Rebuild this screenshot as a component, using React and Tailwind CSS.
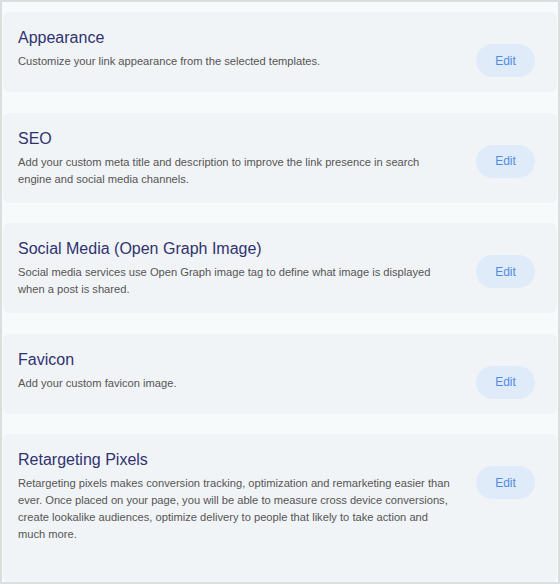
import React from "react";

const items = [
  {
    title: "Appearance",
    desc: "Customize your link appearance from the selected templates.",
  },
  {
    title: "SEO",
    desc: "Add your custom meta title and description to improve the link presence in search engine and social media channels.",
  },
  {
    title: "Social Media (Open Graph Image)",
    desc: "Social media services use Open Graph image tag to define what image is displayed when a post is shared.",
  },
  {
    title: "Favicon",
    desc: "Add your custom favicon image.",
  },
  {
    title: "Retargeting Pixels",
    desc: "Retargeting pixels makes conversion tracking, optimization and remarketing easier than ever. Once placed on your page, you will be able to measure cross device conversions, create lookalike audiences, optimize delivery to people that likely to take action and much more.",
  },
];

export default function App() {
  return (
    <div
      className="w-[560px] h-[584px] border-2 border-[#dcdddd] bg-[#f7fafb] overflow-hidden flex flex-col gap-[20.5px] pt-[10px] px-px"
      style={{ fontFamily: '"Liberation Sans", Arial, sans-serif' }}
    >
      {items.map((it, i) => (
        <div
          key={it.title}
          className={
            "bg-[#f1f4f6] rounded-md flex justify-between items-start pl-[15px] pr-[22px] pt-4 pb-[15px] " +
            (i === items.length - 1 ? "flex-1" : "")
          }
        >
          <div className="w-[434px]">
            <h2 className="text-[16px] leading-[20px] text-[#2f3270] font-normal">
              {it.title}
            </h2>
            <p className="mt-[5px] text-[11.15px] leading-[17px] text-[#555555]">
              {it.desc}
            </p>
          </div>
          <button className="mt-4 w-[59px] h-[33px] shrink-0 rounded-full bg-[#e0ebfa] text-[#4f8ce0] text-[12px] leading-none flex items-center justify-center">
            Edit
          </button>
        </div>
      ))}
    </div>
  );
}
